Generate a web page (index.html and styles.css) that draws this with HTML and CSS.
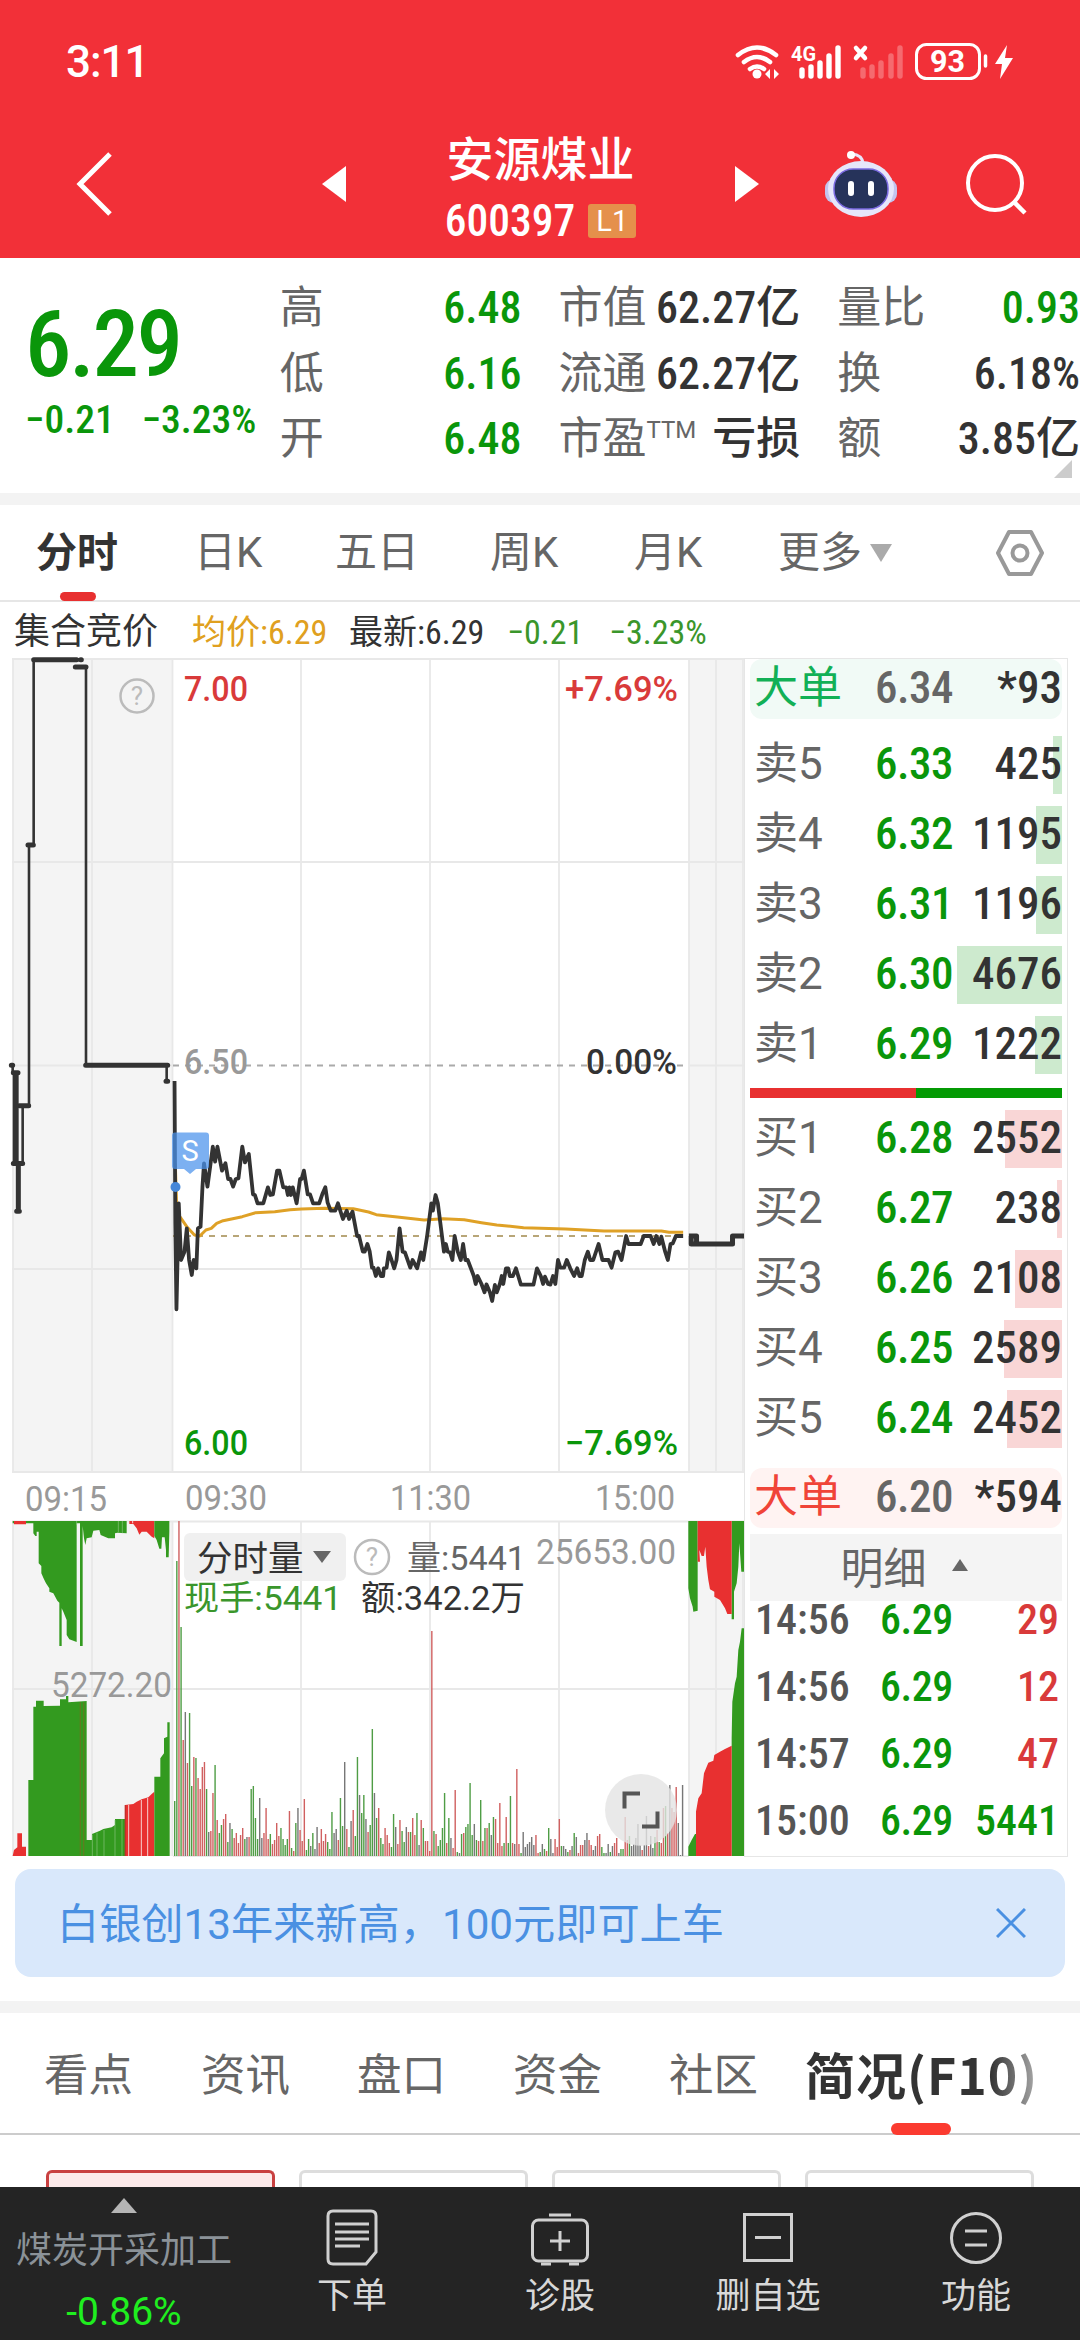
FILE: index.html
```html
<!DOCTYPE html>
<html lang="zh-CN">
    <head>
        <meta charset="UTF-8" />
        <title>安源煤业 600397</title>
        <link rel="stylesheet" href="styles.css">
    </head>
    <body>
        <header class="header">
            <div class="status">
                <span class="clock">3:11</span>
                <svg class="status-icons" width="282" height="40" viewBox="733 40 282 40">
                    <g fill="none" stroke="#fff" stroke-width="4.6" stroke-linecap="round">
                        <path d="M738 53Q757 38 776 53M744 60Q757 50 770 60M750 67Q757 62 764 67" />
                    </g>
                    <circle cx="757" cy="72" r="4.5" fill="#fff" />
                    <path d="M765 72l5-5v10zM779 72l-5-5v10z" fill="#fff" />
                    <text x="791" y="59" font-size="21" font-weight="700" textLength="25" lengthAdjust="spacingAndGlyphs" fill="#fff">4G</text>
                    <g stroke="#fff" stroke-width="5.4" stroke-linecap="round">
                        <path d="M802 68v6M811 65v9M820 61v13M829 54v20M838 46v28" />
                        <path d="M863 68v6M872 65v9M881 61v13M891 54v20M900 46v28" opacity=".28" />
                        <path d="M856 46l9 10M865 46l-9 10" stroke-width="4.5" />
                    </g>
                    <rect x="916.5" y="42.5" width="63" height="34" rx="10" fill="none" stroke="#fff" stroke-width="3" />
                    <text x="930" y="70" font-size="31" font-weight="700" textLength="35" lengthAdjust="spacingAndGlyphs" fill="#fff">93</text>
                    <path d="M985.500 54v10" stroke="#fff" stroke-width="3.500" stroke-linecap="round" />
                    <path d="M1007 43l-12 19h7l-2 15 13-21h-8z" fill="#fff" />
                </svg>
            </div>
            <nav class="nav">
                <svg class="back" width="40" height="68" viewBox="0 0 40 68"><path d="M35 4L5 34l30 30" fill="none" stroke="#fff" stroke-width="5" /></svg>
                <svg class="prev" width="24" height="36" viewBox="0 0 24 36"><path d="M24 0v36L0 18z" fill="#fff" /></svg>
                <div class="title">
                    <div class="title-name">安源煤业</div>
                    <div class="title-code"><span class="n">600397</span><span class="level">L1</span></div>
                </div>
                <svg class="next" width="24" height="36" viewBox="0 0 24 36"><path d="M0 0v36l24-18z" fill="#fff" /></svg>
                <svg class="robot" width="72" height="66" viewBox="0 0 72 66">
                    <path d="M38 12Q37 4 27 3" fill="none" stroke="#e8e5fa" stroke-width="3" />
                    <circle cx="26" cy="4" r="4" fill="#fff" />
                    <rect x="0" y="28" width="72" height="24" rx="9" fill="#c3c4ee" />
                    <ellipse cx="36" cy="38" rx="33" ry="28" fill="#e6e6fa" />
                    <rect x="9" y="18" width="54" height="40" rx="19" fill="#26335a" stroke="#7a6ae0" stroke-width="1.500" />
                    <path d="M26 33v9M46 33v9" stroke="#fff" stroke-width="6" stroke-linecap="round" />
                </svg>
                <svg class="search" width="62" height="62" viewBox="0 0 62 62">
                    <circle cx="30" cy="30" r="27" fill="none" stroke="#fff" stroke-width="4" />
                    <path d="M49 49l11 11" stroke="#fff" stroke-width="4.500" />
                </svg>
            </nav>
        </header>

        <section class="quote">
            <div class="quote-price">
                <div class="last n">6.29</div>
                <div class="change n"><span>−0.21</span><span>−3.23%</span></div>
            </div>
            <dl class="quote-col col-a">
                <div><dt>高</dt><dd class="n down">6.48</dd></div>
                <div><dt>低</dt><dd class="n down">6.16</dd></div>
                <div><dt>开</dt><dd class="n down">6.48</dd></div>
            </dl>
            <dl class="quote-col col-b">
                <div><dt>市值</dt><dd class="n">62.27亿</dd></div>
                <div><dt>流通</dt><dd class="n">62.27亿</dd></div>
                <div><dt>市盈<sup>TTM</sup></dt><dd>亏损</dd></div>
            </dl>
            <dl class="quote-col col-c">
                <div><dt>量比</dt><dd class="n down">0.93</dd></div>
                <div><dt>换</dt><dd class="n">6.18%</dd></div>
                <div><dt>额</dt><dd class="n">3.85亿</dd></div>
            </dl>
            <i class="corner"></i>
        </section>

        <nav class="periods">
            <span class="active">分时</span>
            <span>日K</span>
            <span>五日</span>
            <span>周K</span>
            <span>月K</span>
            <span>更多<i class="caret"></i></span>
            <svg width="48" height="48" viewBox="0 0 48 48" fill="none" stroke="#999" stroke-width="4">
                <path d="M13 3h22l11 21-11 21H13L2 24z" stroke-linejoin="round" />
                <circle cx="24" cy="24" r="7.500" />
            </svg>
        </nav>

        <div class="market">
            <div class="charts">
                <div class="legend n">
                    <span class="auction">集合竞价</span>
                    <span class="avg">均价:6.29</span>
                    <span class="new">最新:6.29</span>
                    <span class="chg">−0.21</span>
                    <span class="chg">−3.23%</span>
                </div>
                <svg class="chart" width="744" height="1200" viewBox="0 657 744 1200">
                    <!-- auction zones -->
                    <path d="M12.500 659H173V1472H12.500zM689 659H743.500V1472H689zM12.500 1521H173V1856H12.500zM689 1521H743.500V1856H689z" fill="#f4f4f4" />
                    <!-- grid -->
                    <g stroke="#e8e8e8" stroke-width="1.800" fill="none">
                        <path d="M12 659H744M12 862H744M12 1065.500H173M689 1065.500H744M12 1269H744M12 1472H744M12 1521.500H744M12 1689H744M173 1856.500H689" />
                        <path d="M13 659V1472M92 659V1472M172.500 659V1472M301 659V1472M430 659V1472M559 659V1472M689 659V1472M716 659V1472M743 659V1472" />
                        <path d="M13 1521V1856M92 1521V1856M172.500 1521V1856M301 1521V1856M430 1521V1856M559 1521V1856M689 1521V1856M716 1521V1856M743 1521V1856" />
                    </g>
                    <path d="M173 1065.500H683" stroke="#aaa" stroke-width="2" stroke-dasharray="6 6" />
                    <path d="M173 1236H683" stroke="#b8a678" stroke-width="2" stroke-dasharray="6 6" />

                    <!-- price axis -->
                    <g class="axis">
                        <text x="184" y="701" textLength="64" class="up">7.00</text>
                        <text x="565" y="701" textLength="113" class="up">+7.69%</text>
                        <text x="184" y="1074" textLength="64" fill="#999">6.50</text>
                        <text x="586" y="1074" textLength="91" fill="#333">0.00%</text>
                        <text x="184" y="1455" textLength="64" class="down">6.00</text>
                        <text x="565" y="1455" textLength="113" class="down">−7.69%</text>
                    </g>
                    <g class="help"><circle cx="137" cy="696" r="16.500" /><text x="137" y="705" text-anchor="middle">?</text></g>
                    <g class="axis times">
                        <text x="25" y="1511" textLength="82">09:15</text>
                        <text x="185" y="1510" textLength="82">09:30</text>
                        <text x="390" y="1510" textLength="81">11:30</text>
                        <text x="595" y="1510" textLength="80">15:00</text>
                    </g>

                    <!-- opening auction line -->
                    <g transform="translate(0 650) scale(.33333 .44643)" fill="none" stroke="#333" stroke-linecap="round">
                        <path vector-effect="non-scaling-stroke" stroke-width="2.600" d="M38 930V945M68 1150V1021M87 1021V437M101 437V22M258 38V930M500 930V966" />
                        <path vector-effect="non-scaling-stroke" stroke-width="5" d="M34 930H38M40 947H54M58 1021H86M84 437H100M101 22H230M242 22H244M226 38H258M257 930H503M498 966H503M40 1150H68M55 1150V1257M50 1257H58" />
                        <path vector-effect="non-scaling-stroke" stroke-width="6" d="M47 945V1150" stroke-linecap="butt" />
                    </g>

                    <!-- session lines -->
                    <g transform="translate(160 1080) scale(.3827 .33333)" fill="none" stroke-linejoin="round">
                        <polyline vector-effect="non-scaling-stroke" stroke="#dfa126" stroke-width="3" points="40,250 44,400 55,415 70,440 90,465 104,468 120,450 134,445 148,430 165,422 215,410 250,398 300,395 340,389 370,387 430,385 505,386 545,396 565,404 620,411 690,420 740,416 795,419 840,428 880,435 950,443 1060,447 1160,453 1310,453 1330,457 1367,457" />
                        <polyline vector-effect="non-scaling-stroke" stroke="#333" stroke-width="3.800" points="38,3 40,430 43,688 49,370 55,540 64,515 70,445 76,540 83,585 88,540 95,565 99,445 106,440 111,320 115,250 124,320 138,200 144,245 150,200 162,272 171,250 178,297 184,297 191,320 198,297 205,295 215,200 222,247 232,222 243,343 248,345 255,370 270,370 282,322 288,345 295,343 306,272 312,272 322,322 330,322 334,345 338,322 342,345 347,322 357,370 366,297 370,297 376,272 386,343 392,343 400,370 416,370 424,343 432,322 438,368 446,392 458,392 465,370 478,417 488,392 494,417 503,395 515,468 520,468 530,515 535,515 542,492 548,515 554,563 558,563 564,588 570,565 577,588 583,588 585,565 592,563 598,517 605,540 612,565 618,540 626,445 634,515 640,517 654,563 660,540 672,565 682,517 688,540 698,468 709,370 713,392 720,345 726,370 742,515 747,492 752,515 758,517 764,540 770,468 778,515 786,540 792,492 798,540 804,540 820,588 825,612 830,588 840,612 848,637 853,613 862,637 868,663 875,615 880,637 888,612 893,588 897,612 904,565 910,565 914,588 922,588 930,565 943,614 976,614 985,565 995,588 1001,612 1006,590 1014,612 1020,614 1027,588 1033,612 1040,540 1046,563 1056,563 1063,540 1072,565 1082,588 1090,565 1096,588 1102,588 1110,540 1118,515 1124,540 1132,540 1146,492 1156,540 1172,540 1180,563 1190,517 1197,515 1206,540 1218,468 1224,492 1256,492 1264,468 1282,468 1290,492 1297,468 1305,492 1310,470 1320,515 1327,540 1334,492 1340,490 1348,468 1367,468" />
                        <path vector-effect="non-scaling-stroke" stroke="#333" stroke-width="5" d="M1382 468H1402V492H1496V468H1526M1388 468V492H1402" />
                    </g>
                    <circle cx="175.500" cy="1187" r="5" fill="#4687d8" />
                    <path d="M175 1132.500H206q3 0 3 3V1166q0 3-3 3H196l-6 5-6-5H175q-3 0-3-3V1135.500q0-3 3-3z" fill="#4a92ec" opacity=".72" />
                    <text x="190" y="1161" font-size="29" text-anchor="middle" fill="#fff">S</text>

                    <!-- auction volume -->
                    <g transform="translate(0 1450) scale(.33333)" class="blocks">
                        <path fill="#339a1f" d="M38 213V220H100V250L106 258H110V245H116V340L124 348V370L132 388L138 400L148 415V425L160 430L172 452L178 458V588H185V475L190 485L200 510V555L208 568L230 576V220H240V588H248V228L252 265L256 285L260 265L275 262L280 242L298 240L302 255L325 265H345V250L352 248L380 250V213z" />
                        <path fill="#e83030" d="M42 213V223H78V213zM388 213V222H400L410 235L418 254L425 245H440L455 260L463 265V213z" />
                        <path fill="#339a1f" d="M463 213V258L470 270L478 296H484L486 262H494L498 300V322H506L508 245V213z" />
                        <path fill="#e83030" d="M38 1218L42 1200L52 1192V1150H66V1190H78V1218zM375 1218V1065L400 1062L410 1055L425 1048L445 1042L455 1032L463 1025V1218z" />
                        <path fill="#339a1f" d="M85 1218V990H100V770H108V752H131V768L180 767V748H198V738H205V757L260 753V1170H276V1152L300 1142L310 1137L335 1132L345 1125V1107H375V1218zM463 1218V980H481V925L492 910V865L502 860V817H509V1218z" />
                        <path stroke="#f7d0d0" stroke-width="3" d="M386 1065V1218M424 1050V1218M443 1044V1218M398 213V220" />
                        <path stroke="#8cc580" stroke-width="2" d="M277 1154V1218M291 1148V1218M312 1140V1218M345 1110V1218M366 1108V1218M230 213V225M355 213V247M367 213V250" />
                        <path stroke="#7b6a23" stroke-width="4" d="M241 757V1218M251 757V1218" opacity=".6" />
                        <path stroke="#c1312c" stroke-width="4" d="M376 1065V1218" />
                        <g transform="translate(1140)">
                            <path fill="#339a1f" d="M925 213V415L930 445L938 470L940 485L953 482V213zM1055 213V508H1062V425L1070 400L1075 350L1078 280L1084 365H1092V213zM925 1218V1190L935 1170L945 1152H950V1218zM1055 1218V865L1057 755L1065 700L1070 680L1075 600L1080 575L1085 535H1092V1218z" />
                            <path fill="#e83030" d="M953 213V335H960L958 300L965 318H972L976 290L980 350L985 390L990 418L1003 425V440L1020 450L1035 475L1042 492H1055V213zM948 1218V1085L955 1045L965 1030L972 970L985 938L1000 932L1003 915L1020 905L1035 897L1055 887V1218z" />
                        </g>
                    </g>
                    <g id="volume"></g>

                    <!-- volume labels -->
                    <rect x="184" y="1533" width="162" height="48" rx="6" fill="#ececec" opacity=".8" />
                    <g class="labels">
                        <text x="197" y="1571" font-size="35.500" fill="#333">分时量</text>
                        <text x="407" y="1570" textLength="119" fill="#666">量:5441</text>
                        <text x="184" y="1610" textLength="158" fill="#3a962b">现手:5441</text>
                        <text x="361" y="1610" textLength="164" fill="#333">额:342.2万</text>
                    </g>
                    <path d="M313 1551h18l-9 12z" fill="#666" />
                    <g class="help"><circle cx="372" cy="1557" r="17" /><text x="372" y="1566" text-anchor="middle">?</text></g>
                    <g class="axis times">
                        <text x="536" y="1564" textLength="140">25653.00</text>
                        <text x="51" y="1697" textLength="121">5272.20</text>
                    </g>
                    <circle cx="641" cy="1810" r="36" fill="#e4e4e4" opacity=".8" />
                    <path d="M624.500 1808.500V1793.500H640M657.500 1811.500V1826.500H642" fill="none" stroke="#555" stroke-width="4" />
                </svg>
            </div>

            <aside class="book">
                <div class="big big-sell"><span>大单</span><b class="n">6.34</b><em class="n">*93</em></div>
                <div class="levels sell">
                    <div class="level-row"><span>卖5</span><b class="n">6.33</b><em class="n">425</em><i style="width: 9px"></i></div>
                    <div class="level-row"><span>卖4</span><b class="n">6.32</b><em class="n">1195</em><i style="width: 26px"></i></div>
                    <div class="level-row"><span>卖3</span><b class="n">6.31</b><em class="n">1196</em><i style="width: 26px"></i></div>
                    <div class="level-row"><span>卖2</span><b class="n">6.30</b><em class="n">4676</em><i style="width: 105px"></i></div>
                    <div class="level-row"><span>卖1</span><b class="n">6.29</b><em class="n">1222</em><i style="width: 27px"></i></div>
                </div>
                <div class="ratio"><i style="width: 53.3%"></i></div>
                <div class="levels buy">
                    <div class="level-row"><span>买1</span><b class="n">6.28</b><em class="n">2552</em><i style="width: 57px"></i></div>
                    <div class="level-row"><span>买2</span><b class="n">6.27</b><em class="n">238</em><i style="width: 5px"></i></div>
                    <div class="level-row"><span>买3</span><b class="n">6.26</b><em class="n">2108</em><i style="width: 47px"></i></div>
                    <div class="level-row"><span>买4</span><b class="n">6.25</b><em class="n">2589</em><i style="width: 58px"></i></div>
                    <div class="level-row"><span>买5</span><b class="n">6.24</b><em class="n">2452</em><i style="width: 55px"></i></div>
                </div>
                <div class="big big-buy"><span>大单</span><b class="n">6.20</b><em class="n">*594</em></div>
                <div class="detail">明细<i></i></div>
                <div class="trades">
                    <div><span class="n">14:56</span><b class="n">6.29</b><em class="n up">29</em></div>
                    <div><span class="n">14:56</span><b class="n">6.29</b><em class="n up">12</em></div>
                    <div><span class="n">14:57</span><b class="n">6.29</b><em class="n up">47</em></div>
                    <div><span class="n">15:00</span><b class="n">6.29</b><em class="n down">5441</em></div>
                </div>
            </aside>
        </div>

        <div class="banner">
            <span>白银创13年来新高，100元即可上车</span>
            <svg width="30" height="30" viewBox="0 0 30 30"><path d="M1 1l28 28M29 1L1 29" stroke="#4a90e2" stroke-width="3" /></svg>
        </div>

        <nav class="sections">
            <span>看点</span>
            <span>资讯</span>
            <span>盘口</span>
            <span>资金</span>
            <span>社区</span>
            <span class="active">简况(F10)</span>
        </nav>
        <div class="chips"><i class="on"></i><i></i><i></i><i></i></div>

        <footer class="toolbar">
            <div class="sector"><i></i><span>煤炭开采加工</span><strong>-0.86%</strong></div>
            <div class="tool">
                <svg width="60" height="60" viewBox="0 0 60 60">
                    <path d="M11 4H49q5 0 5 5V45L44 57H11q-5 0-5-5V9q0-5 5-5z" />
                    <path d="M13 17H47M13 25H47M13 32H47M13 39H38" />
                </svg>
                <span>下单</span>
            </div>
            <div class="tool">
                <svg width="60" height="60" viewBox="0 0 60 60">
                    <rect x="2.500" y="13" width="55" height="41" rx="6" />
                    <path d="M19 8H41M11 57H21M39 57H49M30 24V44M20 34H40" />
                </svg>
                <span>诊股</span>
            </div>
            <div class="tool">
                <svg width="60" height="60" viewBox="0 0 60 60">
                    <rect x="6.500" y="7.500" width="47" height="46" />
                    <path d="M17 30.500H43" />
                </svg>
                <span>删自选</span>
            </div>
            <div class="tool">
                <svg width="60" height="60" viewBox="0 0 60 60">
                    <circle cx="30" cy="31" r="24.500" />
                    <path d="M19 24H41M19 38H41" />
                </svg>
                <span>功能</span>
            </div>
        </footer>
        <script src="script.js"></script>
    </body>
</html>
```

FILE: styles.css
```css
* {
    box-sizing: border-box;
}
body {
    margin: 0;
    width: 1080px;
    height: 2340px;
    overflow: hidden;
    display: flex;
    flex-direction: column;
    background: #fff;
    color: #333;
    font-family: Roboto, "Noto Sans CJK SC", sans-serif;
}
svg {
    display: block;
    flex: none;
}
dl, dd {
    margin: 0;
}
i, em {
    font-style: normal;
}
.n {
    font-stretch: 86%;
}
.up {
    color: #d93a3a;
    fill: #d93a3a;
}
.down {
    color: #0a960a;
    fill: #0a960a;
}

/* header */
.header {
    height: 258px;
    flex: none;
    background: #f23038;
    color: #fff;
}
.status {
    height: 121px;
    padding: 2px 65px 0 66px;
    display: flex;
    align-items: center;
    justify-content: space-between;
}
.clock {
    font-size: 44px;
    font-weight: 500;
    letter-spacing: -1px;
}
.nav {
    height: 137px;
    display: flex;
    align-items: center;
    padding: 0 53px 12px 75px;
}
.prev {
    margin-left: 207px;
}
.title {
    width: 390px;
    text-align: center;
}
.title-name {
    font-size: 47px;
    font-weight: 500;
    line-height: 60px;
    margin-top: 9px;
}
.title-code {
    display: flex;
    align-items: center;
    justify-content: center;
    gap: 13px;
    height: 50px;
    font-size: 43.500px;
    font-weight: 500;
    margin-top: 6px;
}
.level {
    width: 48px;
    height: 34px;
    line-height: 34px;
    border-radius: 3px;
    background: #e5904b;
    font-size: 29px;
    font-weight: 400;
}
.robot {
    margin-left: 66px;
}
.search {
    margin-left: 68px;
}

/* quote summary */
.quote {
    position: relative;
    height: 247px;
    flex: none;
    padding: 18px 0 0 25px;
    display: flex;
    border-bottom: 12px solid #f3f3f3;
}
.quote-price {
    width: 255px;
    color: #0a960a;
    font-weight: 500;
}
.last {
    font-size: 93px;
    letter-spacing: -2.500px;
    line-height: 110px;
    margin-top: 14px;
}
.change {
    display: flex;
    gap: 27px;
    font-size: 39.500px;
    line-height: 44px;
    margin-top: -2px;
    white-space: nowrap;
}
.quote-col > div {
    height: 65.500px;
    display: flex;
    align-items: baseline;
    justify-content: space-between;
    white-space: nowrap;
    line-height: 64px;
}
.quote-col dt {
    font-size: 44px;
    color: #666;
}
.quote-col dd {
    font-size: 44px;
    font-weight: 500;
}
.quote-col sup {
    font-size: 24px;
    line-height: 0;
    font-weight: 400;
    vertical-align: 16px;
}
.col-a {
    width: 242px;
}
.col-b {
    width: 242px;
    margin-left: 37px;
}
.col-c {
    width: 243px;
    margin-left: 37px;
}
.corner {
    position: absolute;
    right: 8px;
    bottom: 15px;
    border-left: 18px solid transparent;
    border-bottom: 18px solid #ccc;
}

/* period tabs */
.periods {
    height: 97px;
    flex: none;
    padding-left: 36px;
    display: grid;
    grid-template-columns: 158px 141px 155px 144px 144px 218px 48px;
    align-items: center;
    border-bottom: 2px solid #e6e6e6;
    font-size: 42px;
    color: #666;
}
.periods span {
    position: relative;
    line-height: 96px;
    display: flex;
    align-items: center;
}
.periods .active {
    color: #333;
    font-weight: 700;
    font-size: 41px;
}
.periods .active::after {
    content: "";
    position: absolute;
    left: 24px;
    bottom: 0;
    width: 36px;
    height: 9px;
    border-radius: 5px;
    background: #e83030;
}
.caret {
    margin-left: 8px;
    border: 11px solid transparent;
    border-top: 18px solid #aaa;
    border-bottom: 0;
}

/* charts */
.market {
    height: 1255px;
    flex: none;
    display: flex;
}
.charts {
    width: 744px;
}
.legend {
    height: 55px;
    padding: 5px 0 0 14px;
    display: flex;
    align-items: center;
    font-size: 34px;
    line-height: 55px;
    white-space: nowrap;
}
.legend .auction {
    font-size: 36px;
    width: 178px;
}
.legend .avg {
    color: #e0a020;
    width: 157px;
}
.legend .new {
    width: 158px;
}
.legend .chg {
    color: #3a962b;
    width: 102px;
}
.axis {
    font-size: 35px;
    font-weight: 500;
}
.times {
    fill: #999;
    font-weight: 400;
}
.labels {
    font-size: 34px;
}
.help circle {
    fill: none;
    stroke: #bbb;
    stroke-width: 2.500;
}
.help text {
    font-size: 26px;
    fill: #bbb;
}

/* order book */
.book {
    width: 324px;
    height: 1199px;
    margin-top: 56px;
    padding: 0 5px;
    border: 1px solid #e6e6e6;
    font-size: 45px;
}
.big,
.level-row,
.trades div {
    position: relative;
    display: grid;
    grid-template-columns: 121px 82px 1fr;
    align-items: baseline;
    padding: 0 0 0 4px;
    white-space: nowrap;
}
.book span {
    font-size: 44px;
    color: #666;
}
.book b {
    font-weight: 500;
    color: #0a960a;
    letter-spacing: -.5px;
}
.book em {
    font-weight: 500;
    text-align: right;
    z-index: 1;
}
.big {
    height: 60px;
    line-height: 58px;
    border-radius: 12px;
}
.big-sell {
    background: #f1faf6;
}
.book .big b {
    color: #666;
}
.book .big-sell span {
    color: #12b056;
}
.big-buy {
    background: #fff3f2;
    margin-top: 14px;
}
.book .big-buy span {
    color: #f04438;
}
.levels {
    padding-top: 11px;
}
.level-row {
    height: 70px;
    line-height: 67px;
}
.level-row i {
    position: absolute;
    right: 0;
    top: 6px;
    height: 58px;
}
.sell i {
    background: #cdeace;
}
.buy i {
    background: #f9d6d6;
}
.ratio {
    height: 10px;
    margin-top: 8px;
    background: #049a04;
}
.ratio i {
    display: block;
    height: 10px;
    background: #e83030;
}
.buy {
    padding-top: 6px;
}
.detail {
    height: 67px;
    margin-top: 6px;
    padding: 0 4px 5px 0;
    display: flex;
    align-items: center;
    justify-content: center;
    gap: 25px;
    background: #f4f4f4;
    color: #666;
    font-size: 43px;
}
.detail i {
    border: 8px solid transparent;
    border-bottom: 12px solid #666;
    border-top: 0;
}
.trades {
    margin-top: -15px;
}
.trades div {
    height: 67px;
    line-height: 67px;
    font-size: 42px;
    grid-template-columns: 125px 82px 1fr;
    padding: 0 3px 0 5px;
}
.trades span {
    color: #555;
    font-weight: 500;
    font-size: 42px;
}

/* promo banner */
.banner {
    height: 108px;
    flex: none;
    margin: 12px 15px 24px;
    padding: 0 39px 0 42px;
    border-radius: 16px;
    background: #d9e8fb;
    color: #4a90e2;
    font-size: 42.200px;
    display: flex;
    align-items: center;
    justify-content: space-between;
}
.banner span {
    padding-bottom: 5px;
}

/* section tabs */
.sections {
    height: 134px;
    flex: none;
    padding: 0 0 0 44px;
    border-top: 12px solid #f3f3f3;
    border-bottom: 2px solid #ccc;
    display: grid;
    grid-template-columns: 157px 156px 156px 156px 136px 1fr;
    align-items: center;
    color: #666;
    font-size: 44.500px;
    line-height: 120px;
    white-space: nowrap;
}
.sections span {
    padding-top: 3px;
}
.sections .active {
    position: relative;
    width: 232px;
    height: 120px;
    padding: 0;
    line-height: 116px;
    font-family: "Noto Sans CJK SC", sans-serif;
    font-size: 50px;
    font-weight: 700;
    letter-spacing: 1px;
    background: linear-gradient(90deg, #333 80%, #aaa);
    background-clip: text;
    color: transparent;
}
.sections .active::after {
    content: "";
    position: absolute;
    left: 86px;
    bottom: 0;
    width: 60px;
    height: 12px;
    border-radius: 6px;
    background: #fb3b30;
}
.chips {
    flex: 1;
    display: grid;
    grid-template-columns: repeat(4, 1fr);
    gap: 24px;
    padding: 35px 46px 0;
}
.chips i {
    border: 3px solid #ddd;
    border-bottom: 0;
    border-radius: 6px 6px 0 0;
}
.chips .on {
    border-color: #c94141;
    background: #fdeaea;
}

/* bottom toolbar */
.toolbar {
    height: 153px;
    flex: none;
    display: grid;
    grid-template-columns: 248px repeat(4, 208px);
    background: #242424;
    color: #d8d8d8;
}
.sector {
    display: flex;
    flex-direction: column;
    align-items: center;
    padding-top: 11px;
}
.sector i {
    border: 13px solid transparent;
    border-top: 0;
    border-bottom: 15px solid #b5b5b5;
}
.sector span {
    margin-top: 11px;
    font-size: 36px;
    line-height: 54px;
    color: #8b9298;
}
.sector strong {
    margin-top: 12px;
    font-size: 39px;
    line-height: 44px;
    font-weight: 400;
    color: #1fee1f;
}
.tool {
    display: flex;
    flex-direction: column;
    align-items: center;
    padding-top: 20px;
    font-size: 35px;
    line-height: 48px;
}
.tool svg {
    fill: none;
    stroke: #d0d0d0;
    stroke-width: 3;
    margin-bottom: 6px;
}
```

FILE: script.js
```js
// minute volumes, 09:30 - 15:00, height in px followed by direction (r/g/k)
const volumes = (
    "55g 295g 335r 229g 116r 144k 93r 143g 70g 99r 98g 78r 67r 89r 94r 67g 24k 25r 63r 91g " +
    "36r 23g 31g 37r 42r 14g 33k 27g 18r 23r 13r 21r 28r 17g 19k 19r 67g 70g 38g 17g " +
    "58k 18k 23r 48r 17r 22g 12r 16r 33r 20r 28g 17g 11g 17g 45r 8g 5r 33g 48k 26r " +
    "15r 57r 6g 17g 10k 23g 7k 29k 13r 27r 15r 22r 14g 7g 44g 23k 27k 16r 58g 30g " +
    "94k 27r 9g 35k 46r 20g 99g 61k 43g 61g 37k 24r 31g 127g 63k 38g 48r 18g 12g 28r " +
    "21r 13r 9g 42g 29k 12r 36r 25g 14g 29k 24r 24g 38r 21r 43g 11k 36r 28g 15r 15r " +
    "5r 225r 25g 22r 10g 16g 28g 63g 13r 38g 18k 8r 66r 4g 3k 22g 23r 29g 32g 73g " +
    "21g 32k 16g 15r 56g 15r 28g 28r 33g 21k 39g 37r 13r 53r 10r 13g 39r 13g 60g 13r " +
    "12k 87r 12r 3g 24k 9k 12k 14k 19k 11k 21r 3r 4g 12k 7g 5r 28g 17k 3k 17r " +
    "9r 37r 10g 10k 7k 4g 6r 10k 23g 19k 3r 11r 11r 16k 23k 16r 11r 6k 10k 20r " +
    "22r 9g 3g 3k 12k 4g 10k 13r 18r 3k 7g 7g 39r 16r 20g 10k 12k 18k 32k 11k " +
    "6r 11k 40k 10r 20k 8k 19g 26r 14g 13r 48r 50g 23r 71k 48r 44r 69r 33k 1k 71k"
).split(" ");
const colors = { r: "#d06060", g: "#4f9d45", k: "#777" };
const group = document.getElementById("volume");

volumes.forEach((item, i) => {
    const height = parseInt(item);
    const rect = document.createElementNS("http://www.w3.org/2000/svg", "rect");
    rect.setAttribute("x", (174 + i * 2.125).toFixed(2));
    rect.setAttribute("y", 1856 - height);
    rect.setAttribute("width", 1.4);
    rect.setAttribute("height", height);
    rect.setAttribute("fill", colors[item.slice(-1)]);
    group.appendChild(rect);
});

// squeeze the labels' glyphs instead of their gaps
document.querySelectorAll(".chart text[textLength]").forEach((text) => {
    text.setAttribute("lengthAdjust", "spacingAndGlyphs");
});
```
